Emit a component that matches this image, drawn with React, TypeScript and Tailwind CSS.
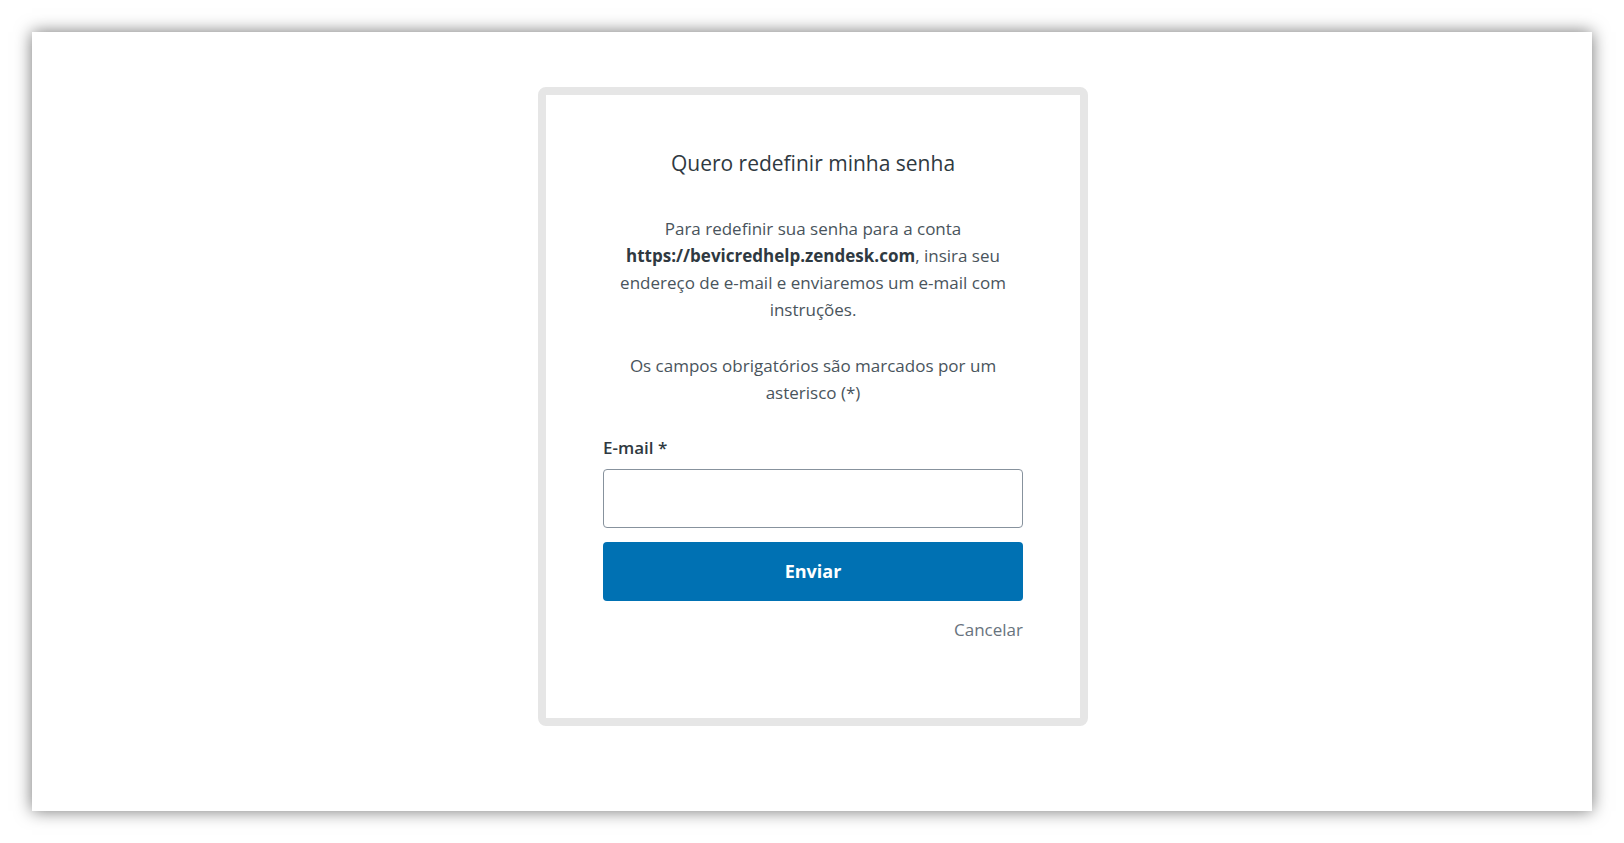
import React from "react";

const App = () => {
  return (
    <div className="bg-white p-8" style={{ fontFamily: "'Open Sans', 'Noto Sans', sans-serif" }}>
      <div className="h-[779px] bg-white shadow-[0_0_16px_rgba(0,0,0,0.55)] flex justify-center pt-[55px]">
        {/* Cartão de redefinição */}
        <div className="w-[550px] h-[639px] border-8 border-[#e6e6e6] rounded-lg px-[57px] pt-[53px] translate-x-px">
          <h1 className="text-center text-[21px] leading-[30px] text-[#2f3941]">Quero redefinir minha senha</h1>

          <p className="mt-[37px] text-center text-[17px] leading-[27px] text-[#49545c]">
            Para redefinir sua senha para a conta{" "}
            <strong className="font-bold text-[#2f3941]">https://bevicredhelp.zendesk.com</strong>, insira seu
            endereço de e-mail e enviaremos um e-mail com instruções.
          </p>

          <p className="mt-[29px] text-center text-[17px] leading-[27px] text-[#49545c]">
            Os campos obrigatórios são marcados por um asterisco (*)
          </p>

          <label className="mt-[31px] block text-[17px] leading-[22px] font-semibold text-[#2f3941]">
            E-mail *
          </label>
          <input
            type="email"
            className="mt-[10px] block w-full h-[59px] rounded border border-[#87929d] bg-white px-3"
          />
          <button className="mt-[14px] block w-full h-[59px] rounded bg-[#0071b3] text-white text-[18px] font-bold">
            Enviar
          </button>
          <div className="mt-[18px] text-right text-[17px] leading-[22px] text-[#68737d]">Cancelar</div>
        </div>
      </div>
    </div>
  );
};

export default App;
